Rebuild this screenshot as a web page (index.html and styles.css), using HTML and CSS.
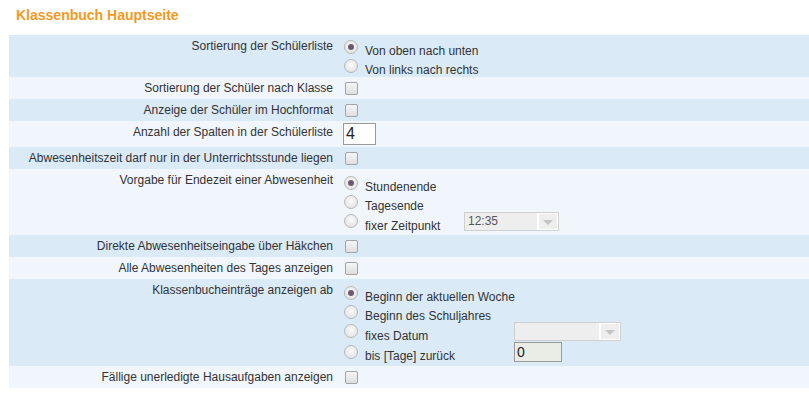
FILE: index.html
```html
<!DOCTYPE html>
<html lang="de">
<head>
    <meta charset="UTF-8" />
    <meta name="viewport" content="width=device-width, initial-scale=1.0" />
    <link rel="stylesheet" href="styles.css">
</head>
<body>
    <h1 class="page-title">Klassenbuch Hauptseite</h1>

    <div class="settings">
        <!-- Sortierung -->
        <div class="setting-row dark">
            <div class="setting-label">Sortierung der Schülerliste</div>
            <div class="setting-control radio-group tight">
                <div class="opt"><span class="radio checked"></span><span class="opt-text">Von oben nach unten</span></div>
                <div class="opt"><span class="radio"></span><span class="opt-text">Von links nach rechts</span></div>
            </div>
        </div>
        <div class="setting-row light">
            <div class="setting-label">Sortierung der Schüler nach Klasse</div>
            <div class="setting-control check-cell"><span class="checkbox"></span></div>
        </div>
        <div class="setting-row dark">
            <div class="setting-label">Anzeige der Schüler im Hochformat</div>
            <div class="setting-control check-cell"><span class="checkbox"></span></div>
        </div>
        <div class="setting-row light">
            <div class="setting-label">Anzahl der Spalten in der Schülerliste</div>
            <div class="setting-control input-cell"><div class="text-input cols-input">4</div></div>
        </div>
        <div class="setting-row dark">
            <div class="setting-label">Abwesenheitszeit darf nur in der Unterrichtsstunde liegen</div>
            <div class="setting-control check-cell"><span class="checkbox"></span></div>
        </div>

        <!-- Endezeit -->
        <div class="setting-row light">
            <div class="setting-label">Vorgabe für Endezeit einer Abwesenheit</div>
            <div class="setting-control radio-group end-time">
                <div class="opt"><span class="radio checked"></span><span class="opt-text">Stundenende</span></div>
                <div></div>
                <div class="opt"><span class="radio"></span><span class="opt-text">Tagesende</span></div>
                <div></div>
                <div class="opt"><span class="radio"></span><span class="opt-text">fixer Zeitpunkt</span></div>
                <div class="select disabled time-select">
                    <span class="select-value">12:35</span>
                    <span class="select-arrow"></span>
                </div>
            </div>
        </div>
        <div class="setting-row dark">
            <div class="setting-label">Direkte Abwesenheitseingabe über Häkchen</div>
            <div class="setting-control check-cell"><span class="checkbox"></span></div>
        </div>
        <div class="setting-row light">
            <div class="setting-label">Alle Abwesenheiten des Tages anzeigen</div>
            <div class="setting-control check-cell"><span class="checkbox"></span></div>
        </div>

        <!-- Klassenbucheinträge -->
        <div class="setting-row dark">
            <div class="setting-label">Klassenbucheinträge anzeigen ab</div>
            <div class="setting-control radio-group entries-from">
                <div class="opt"><span class="radio checked"></span><span class="opt-text">Beginn der aktuellen Woche</span></div>
                <div></div>
                <div class="opt"><span class="radio"></span><span class="opt-text">Beginn des Schuljahres</span></div>
                <div></div>
                <div class="opt"><span class="radio"></span><span class="opt-text">fixes Datum</span></div>
                <div class="select disabled date-select">
                    <span class="select-value"></span>
                    <span class="select-arrow"></span>
                </div>
                <div class="opt"><span class="radio"></span><span class="opt-text">bis [Tage] zurück</span></div>
                <div class="text-input days-input">0</div>
            </div>
        </div>
        <div class="setting-row light">
            <div class="setting-label">Fällige unerledigte Hausaufgaben anzeigen</div>
            <div class="setting-control check-cell"><span class="checkbox"></span></div>
        </div>
    </div>
</body>
</html>
```

FILE: styles.css
```css
body {
    margin: 0;
    font-family: "Liberation Sans", Arial, sans-serif;
    font-size: 12px;
    color: #333;
    background-color: #fff;
}
.page-title {
    margin: 0;
    padding: 7px 0 0 16px;
    height: 28px;
    box-sizing: border-box;
    font-size: 14px;
    line-height: 16px;
    font-weight: bold;
    color: #f39a1e;
}
.settings {
    margin: 7px 0 0 9px;
}
/* Rows */
.setting-row {
    display: grid;
    grid-template-columns: 330px 1fr;
}
.setting-row.dark {
    background-color: #daeaf7;
}
.setting-row.light {
    background-color: #f0f6fb;
}
.setting-label {
    text-align: right;
    padding: 4px 6px 4px 0;
    line-height: 14px;
}
.setting-control {
    padding-left: 5px;
}
.check-cell {
    padding-top: 5px;
    padding-bottom: 4px;
}
.input-cell {
    padding-top: 2px;
    padding-bottom: 2px;
    padding-left: 4px;
}
/* Checkbox */
.checkbox {
    display: block;
    width: 11px;
    height: 11px;
    border: 1px solid #a3a3a3;
    border-radius: 2px;
    background: linear-gradient(#f6f6f6, #dedede);
    margin-left: 1px;
}
/* Radio groups */
.radio-group {
    display: grid;
    grid-template-columns: 1fr;
    align-items: center;
    padding-top: 4px;
    padding-bottom: 4px;
}
.radio-group.tight {
    padding-top: 2px;
    padding-bottom: 2px;
}
.radio-group.end-time {
    grid-template-columns: 120px auto;
    align-content: start;
}
.radio-group.entries-from {
    grid-template-columns: 170px auto;
    align-content: start;
}
.opt {
    display: flex;
    align-items: center;
}
.opt-text {
    padding-top: 8px;
    margin-bottom: -2px;
    line-height: 13px;
    margin-left: 7px;
    white-space: nowrap;
}
.radio {
    width: 12px;
    height: 12px;
    border: 1px solid #b8b8b8;
    border-radius: 50%;
    background: radial-gradient(circle at 50% 40%, #fbfbfb, #dcdcdc);
    display: flex;
    align-items: center;
    justify-content: center;
    flex-shrink: 0;
}
.radio.checked::after {
    content: "";
    width: 6px;
    height: 6px;
    border-radius: 50%;
    background-color: #6b5a6b;
}
/* Selects and inputs */
.select {
    display: flex;
    height: 19px;
    box-sizing: border-box;
    border: 1px solid #cfcfcf;
    background-color: #eeeeee;
    margin: 1px 0 0;
}
.time-select {
    width: 95px;
}
.date-select {
    width: 107px;
}
.select-value {
    flex: 1;
    padding-left: 3px;
    line-height: 17px;
    color: #555;
}
.select-arrow {
    width: 21px;
    border-left: 2px solid #fff;
    border-right: 1px solid #fff;
    border-top: 1px solid #fff;
    border-bottom: 1px solid #fff;
    box-sizing: border-box;
    display: flex;
    align-items: center;
    justify-content: center;
}
.select-arrow::after {
    content: "";
    border-left: 5px solid transparent;
    border-right: 5px solid transparent;
    border-top: 5px solid #c4c4c4;
    margin-top: 1px;
}
.text-input {
    box-sizing: border-box;
    border: 1px solid #9a9a9a;
    color: #222;
}
.cols-input {
    width: 33px;
    height: 22px;
    background-color: #fff;
    font-size: 16px;
    line-height: 20px;
    padding-left: 2px;
}
.days-input {
    width: 48px;
    height: 20px;
    margin-top: 1px;
    background-color: #eaede5;
    font-size: 14px;
    line-height: 18px;
    padding-left: 2px;
}
```
